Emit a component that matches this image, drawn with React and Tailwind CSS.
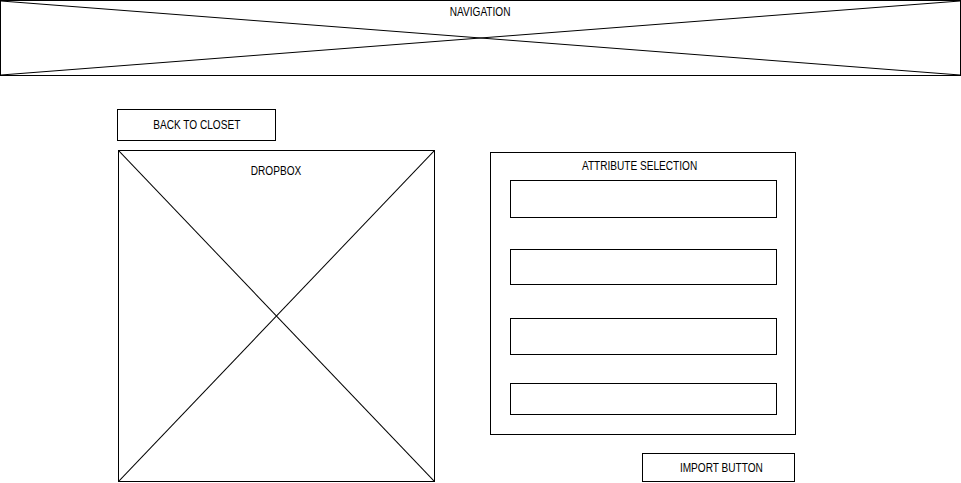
import React from "react";

const font = { fontFamily: '"Liberation Sans", Arial, sans-serif' };

function Cross() {
  return (
    <svg className="absolute inset-0 h-full w-full" viewBox="0 0 100 100" preserveAspectRatio="none">
      <line x1="0" y1="0" x2="100" y2="100" stroke="#000" strokeWidth="1" vectorEffect="non-scaling-stroke" />
      <line x1="100" y1="0" x2="0" y2="100" stroke="#000" strokeWidth="1" vectorEffect="non-scaling-stroke" />
    </svg>
  );
}

function Label({ children }) {
  return <span className="inline-block origin-center scale-x-[0.84] whitespace-nowrap">{children}</span>;
}

export default function App() {
  return (
    <div className="h-[483px] w-[961px] overflow-hidden bg-white text-black" style={font}>
      <div className="relative h-[76px] w-[961px] border border-black">
        <Cross />
        <div className="relative pt-[4px] text-center text-[12px] leading-[14px]">
          <Label>NAVIGATION</Label>
        </div>
      </div>
      <div className="flex pt-[33px]">
        <div className="ml-[117px] flex w-[318px] flex-col">
          <div className="flex h-[32px] w-[159px] items-center justify-center border border-black text-[12px] leading-[14px]">
            <Label>BACK TO CLOSET</Label>
          </div>
          <div className="relative ml-[1px] mt-[9px] h-[332px] w-[317px] border border-black">
            <Cross />
            <div className="relative pt-[13px] text-center text-[12px] leading-[14px]">
              <Label>DROPBOX</Label>
            </div>
          </div>
        </div>
        <div className="ml-[55px] flex flex-col pt-[43px]">
          <div className="flex h-[283px] w-[306px] flex-col border border-black pl-[19px]">
            <div className="w-[267px] pr-[8px] pt-[6px] text-center text-[12px] leading-[14px]">
              <Label>ATTRIBUTE SELECTION</Label>
            </div>
            <div className="mt-[7px] h-[38px] w-[267px] border border-black" />
            <div className="mt-[31px] h-[36px] w-[267px] border border-black" />
            <div className="mt-[33px] h-[37px] w-[267px] border border-black" />
            <div className="mt-[28px] h-[32px] w-[267px] border border-black" />
          </div>
          <div className="ml-[152px] mt-[18px] flex h-[29px] w-[153px] items-center justify-center border border-black pl-[6px] text-[12px] leading-[14px]">
            <Label>IMPORT BUTTON</Label>
          </div>
        </div>
      </div>
    </div>
  );
}
